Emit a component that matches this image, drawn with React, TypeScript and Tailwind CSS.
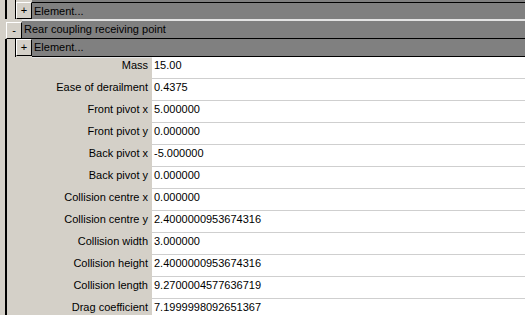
const props: [string, string][] = [
  ['Mass', '15.00'],
  ['Ease of derailment', '0.4375'],
  ['Front pivot x', '5.000000'],
  ['Front pivot y', '0.000000'],
  ['Back pivot x', '-5.000000'],
  ['Back pivot y', '0.000000'],
  ['Collision centre x', '0.000000'],
  ['Collision centre y', '2.4000000953674316'],
  ['Collision width', '3.000000'],
  ['Collision height', '2.4000000953674316'],
  ['Collision length', '9.2700004577636719'],
  ['Drag coefficient', '7.1999998092651367'],
]

function ToggleBox({ sign }: { sign: string }) {
  return (
    <div className="w-[16px] h-[17px] bg-[#d4d0c8] border-t border-l border-white border-r border-b border-r-black border-b-black flex items-center justify-center leading-none text-[11px]">
      {sign}
    </div>
  )
}

export default function App() {
  return (
    <div className="w-[525px] h-[315px] overflow-hidden bg-[#d4d0c8] text-black text-[11px] font-['Liberation_Sans',Arial,sans-serif]">
      {/* tail of the group above */}
      <div className="flex h-[19px]">
        <div className="w-[5px]" />
        <div className="w-[2px] bg-black" />
        <div className="w-[8px]" />
        <div className="w-px bg-black" />
        <div className="flex flex-col justify-end">
          <ToggleBox sign="+" />
        </div>
        <div className="flex-1 bg-[#808080] flex flex-col">
          <div className="h-[2px]" />
          <div className="flex-1 border-t border-black flex items-center pl-[2px]">Element...</div>
        </div>
      </div>

      {/* Rear coupling group header */}
      <div className="flex h-[20px]">
        <div className="w-[6px]" />
        <div className="flex flex-col justify-end">
          <ToggleBox sign="-" />
        </div>
        <div className="flex-1 bg-[#808080] border-t-2 border-t-[#e4e4e4] border-b border-b-black flex items-center pl-[2px]">
          Rear coupling receiving point
        </div>
      </div>

      {/* nested element */}
      <div className="flex h-[18px]">
        <div className="w-[5px]" />
        <div className="w-[2px] bg-black" />
        <div className="w-[8px]" />
        <div className="w-px bg-black" />
        <div className="flex flex-col">
          <ToggleBox sign="+" />
        </div>
        <div className="flex-1 flex flex-col">
          <div className="flex-1 bg-[#808080] border-b border-black flex items-center pl-[2px]">Element...</div>
          <div className="h-[2px] bg-[#e4e4e4]" />
        </div>
      </div>

      {/* properties */}
      {props.map(([label, value]) => (
        <div key={label} className="flex h-[22px]">
          <div className="w-[5px]" />
          <div className="w-[2px] bg-black" />
          <div className="w-[145px] flex items-center justify-end pr-[4px] pb-[5px]">{label}</div>
          <div className="flex-1 bg-white border-b border-[#cfcfcf] flex items-center pl-[2px] pb-[5px]">{value}</div>
        </div>
      ))}
    </div>
  )
}
